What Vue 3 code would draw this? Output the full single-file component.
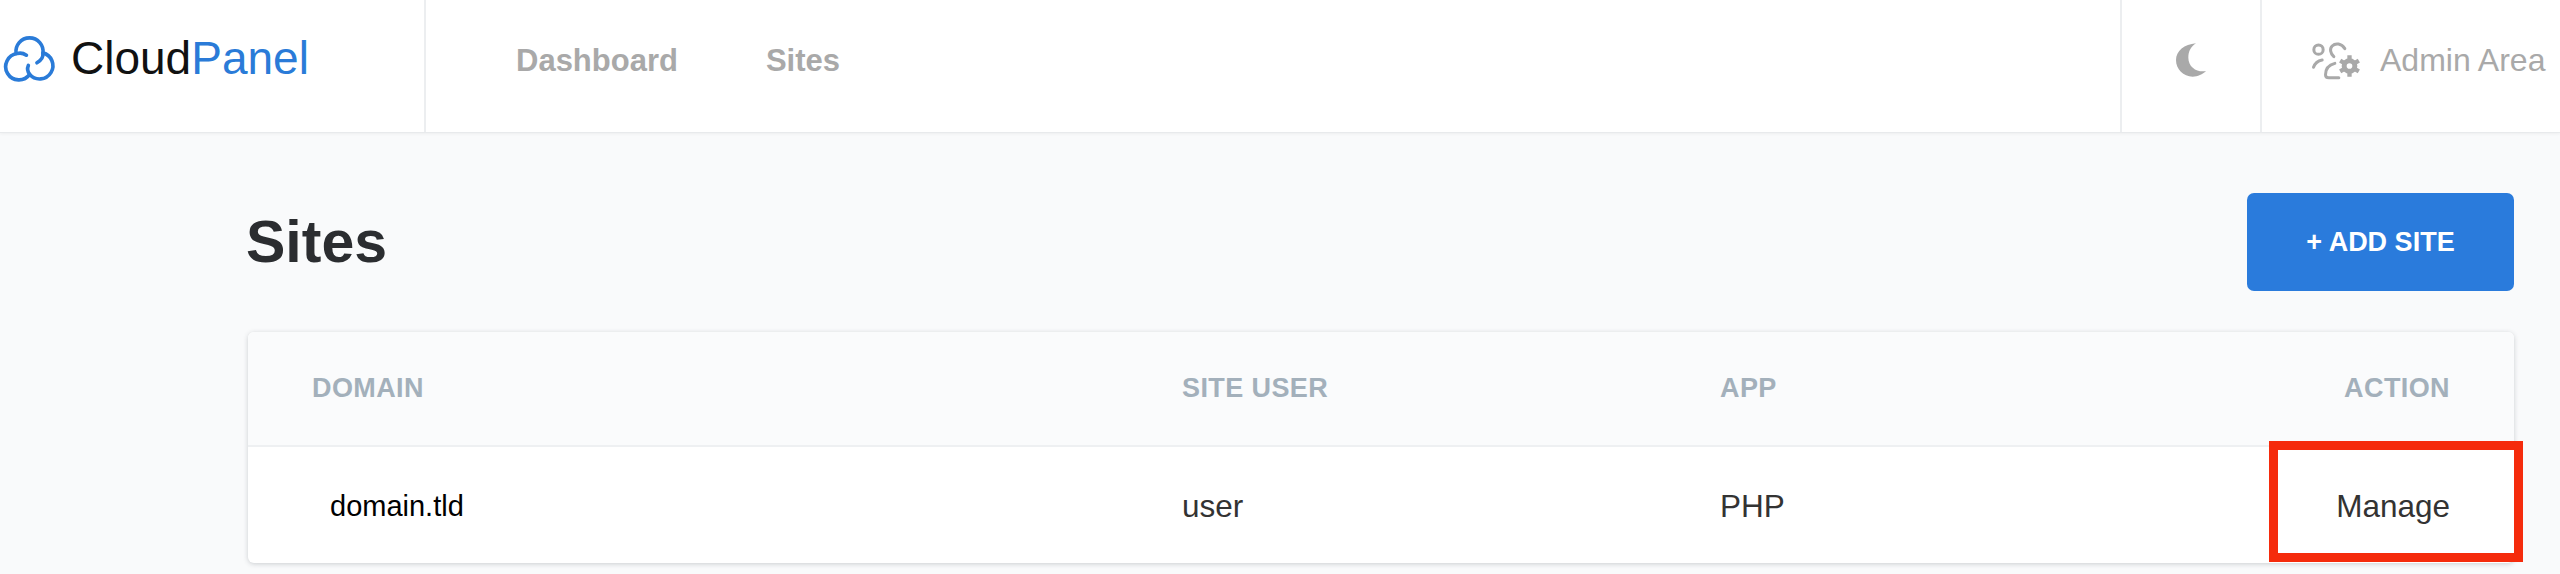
<script setup>
const navLinks = ['Dashboard', 'Sites'];
const sites = [{ domain: 'domain.tld', user: 'user', app: 'PHP' }];
</script>

<template>
  <div class="page">
    <header class="topbar">
      <div class="brand">
        <svg class="brand-icon" viewBox="8 3 165 145" fill="none" stroke="#2a7bd8" stroke-width="11" stroke-linecap="round">
          <path d="M47 62A41 41 0 1 1 128 62Q130 78 110 90" />
          <path d="M78 67Q65 58 50 62A40 40 0 1 0 88 125" />
          <path d="M128 60A40 40 0 1 1 88 125Q78 112 84 98" />
        </svg>
        <span class="brand-name">Cloud<span class="brand-accent">Panel</span></span>
      </div>
      <nav class="nav">
        <a v-for="link in navLinks" :key="link" class="nav-link">{{ link }}</a>
      </nav>
      <div class="theme-toggle">
        <svg class="moon" viewBox="20 42 90 100" fill="#a9a9a9">
          <path d="M80 42C45 45 20 65 20 92 20 120 42 142 70 142 85 142 100 135 110 125 85 130 57 115 57 85 57 65 65 52 80 42Z" />
        </svg>
      </div>
      <div class="admin">
        <svg class="admin-icon" viewBox="33 31 146 117" fill="none" stroke="#a9a9a9" stroke-width="9" stroke-linecap="round">
          <circle cx="55" cy="57" r="14" />
          <path d="M40 110Q46 92 66 88" />
          <path d="M101 78C90 68 88 54 96 46 106 36 124 38 134 54" />
          <path d="M104 98C88 102 76 112 76 132 76 138 80 141 86 141H116" />
          <circle cx="148" cy="106" r="16" stroke-width="15" />
          <path d="M148 74V90M148 122V138M120 90L134 98M162 114L176 122M120 122L134 114M162 98L176 90" stroke-width="13" stroke-linecap="butt" />
        </svg>
        <span>Admin Area</span>
      </div>
    </header>

    <main class="content">
      <div class="title-row">
        <h1>Sites</h1>
        <button class="add-btn">+ ADD SITE</button>
      </div>

      <div class="card">
        <div class="row head">
          <div>DOMAIN</div>
          <div>SITE USER</div>
          <div>APP</div>
          <div class="right">ACTION</div>
        </div>
        <div v-for="site in sites" :key="site.domain" class="row body">
          <div class="domain">{{ site.domain }}</div>
          <div>{{ site.user }}</div>
          <div>{{ site.app }}</div>
          <div class="right">Manage</div>
        </div>
        <div class="highlight"></div>
      </div>
    </main>
  </div>
</template>

<style>
html, body {
  margin: 0;
  background: #f9fafb;
}
</style>

<style scoped>
.page {
  height: 574px;
  overflow: hidden;
  background: #f9fafb;
  font-family: "Liberation Sans", Arial, sans-serif;
}

.topbar {
  display: flex;
  align-items: stretch;
  height: 132px;
  background: #fff;
  border-bottom: 1px solid #e8eaec;
  box-shadow: 0 1px 3px rgba(0, 0, 0, 0.05);
}

.brand {
  display: flex;
  align-items: center;
  gap: 13px;
  box-sizing: border-box;
  width: 426px;
  padding: 0 0 16px 3px;
  border-right: 2px solid #eceef0;
}
.brand-icon { width: 55px; height: 48px; }
.brand-name { font-size: 46px; color: #111; }
.brand-accent { color: #2a7bd8; }

.nav {
  flex: 1;
  display: flex;
  align-items: center;
  gap: 88px;
  padding: 0 0 10px 90px;
}
.nav-link {
  font-size: 31px;
  font-weight: 700;
  color: #a9a9a9;
}

.theme-toggle {
  display: flex;
  align-items: center;
  justify-content: center;
  box-sizing: border-box;
  width: 142px;
  padding-bottom: 12px;
  border-left: 2px solid #eceef0;
  border-right: 2px solid #eceef0;
}
.moon { width: 30px; height: 34px; }

.admin {
  display: flex;
  align-items: center;
  gap: 20px;
  width: 298px;
  padding: 0 0 12px 49px;
  box-sizing: border-box;
  font-size: 32px;
  white-space: nowrap;
  color: #a9a9a9;
}
.admin-icon { width: 49px; height: 39px; flex: none; }

.content {
  padding: 60px 46px 0 248px;
}

.title-row {
  display: flex;
  align-items: center;
  justify-content: space-between;
  margin-bottom: 41px;
}
h1 {
  margin: 0 0 0 -2px;
  font-size: 59px;
  font-weight: 700;
  color: #2b2d30;
}
.add-btn {
  width: 267px;
  height: 98px;
  border: 0;
  border-radius: 7px;
  background: #2a7bdc;
  color: #fff;
  font-family: inherit;
  font-size: 27px;
  font-weight: 700;
}

.card {
  position: relative;
  border-radius: 6px;
  background: #fff;
  box-shadow: 0 1px 5px rgba(40, 50, 60, 0.22);
}

.row {
  display: grid;
  grid-template-columns: 870px 538px 1fr 200px;
  align-items: center;
  padding: 0 64px;
}
.head {
  height: 113px;
  border-radius: 6px 6px 0 0;
  border-bottom: 2px solid #eef0f2;
  background: #fafbfc;
  font-size: 27px;
  font-weight: 700;
  letter-spacing: 0.4px;
  color: #a3b0bb;
}
.body {
  height: 116px;
  padding-top: 2px;
  box-sizing: border-box;
  font-size: 31.5px;
  color: #333;
}
.domain {
  padding-left: 18px;
  font-size: 29px;
  color: #000;
}
.right { text-align: right; }

.highlight {
  position: absolute;
  right: -9px;
  bottom: 1px;
  width: 236px;
  height: 103px;
  border: 9px solid #f52b0c;
}
</style>
